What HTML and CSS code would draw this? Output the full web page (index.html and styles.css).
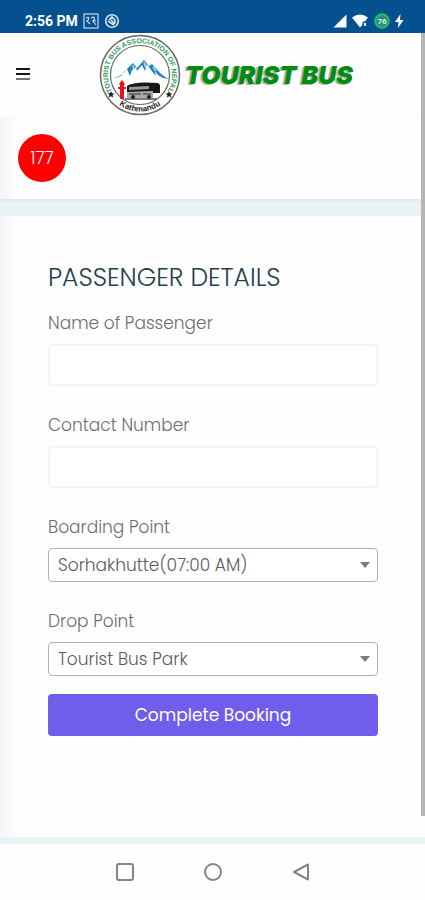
FILE: index.html
```html
<!DOCTYPE html>
<html lang="en">
<head>
  <meta charset="UTF-8" />
  <meta name="viewport" content="width=device-width, initial-scale=1" />
  <title>Tourist Bus - Passenger Details</title>
  <link rel="stylesheet" href="styles.css">
</head>
<body>
  <div class="status-bar">
    <div class="status-left">
      <span class="time">2:56 PM</span>
      <svg width="16" height="16" viewBox="0 0 16 16" fill="none" stroke="#c3d9ea" stroke-width="1.2">
        <rect x="1" y="1" width="14" height="14" />
        <path d="M3 5c3-2 4 1 1 3l3 3M8 5c3-2 5 0 2 3h3M10 8l3 4" />
      </svg>
      <svg width="16" height="16" viewBox="0 0 16 16" fill="none" stroke="#d5e5f1" stroke-width="1.6">
        <circle cx="8" cy="8" r="6.3" />
        <path d="M5 7l3-3 3 3v3M4 8l6 4M7 7l4 4" />
      </svg>
    </div>
    <div class="status-right">
      <svg width="14" height="14" viewBox="0 0 14 14" fill="#fff"><path d="M13.500 0.500V13.500H0.500Z" /></svg>
      <svg width="17" height="14" viewBox="0 0 17 14" fill="#fff">
        <path d="M0 3.500Q8 -2.500 16 3.500L13 7.500H11L10 11.500 8 13.500Z" />
        <path d="M12 9h2v3h-2z" />
      </svg>
      <svg width="16" height="16" viewBox="0 0 16 16">
        <circle cx="8" cy="8" r="6.800" fill="#2c8b83" stroke="#20c15d" stroke-width="2" />
        <text class="battery-text" x="8" y="11" text-anchor="middle">76</text>
      </svg>
      <svg width="9" height="14" viewBox="0 0 9 14" fill="#fff"><path d="M5.500 0L0 8h3.500L3 14l5.500-8H5z" /></svg>
    </div>
  </div>

  <header class="header">
    <button class="menu-btn" type="button" aria-label="Menu">
      <svg width="16" height="16" viewBox="0 0 16 16">
        <path d="M1 2h14M1 7h14" stroke="#161616" stroke-width="2" />
        <path d="M1 12h14" stroke="#777" stroke-width="2" />
      </svg>
    </button>
    <a href="#" class="brand">
      <svg class="seal" width="82" height="82" viewBox="0 0 82 82">
        <defs>
          <path id="arc-top" d="M12.700 56A32 32 0 1 1 69.300 56" />
          <path id="arc-bottom" d="M16 67.600A36.500 36.500 0 0 0 66 67.600" />
        </defs>
        <circle cx="41" cy="41" r="39.500" fill="#fff" stroke="#666" stroke-width="1.500" />
        <circle cx="41" cy="41" r="29.500" fill="#fff" stroke="#666" stroke-width="1.200" />
        <path d="M13 45l9-3 4-5 8-8 4 5 7-8 5 6 3-2 8 9 5 4 4 2-6-1-5-3-3-4 1 5-5-6-4-6-2 7-3-6-5 6-1-4-4 3-2 6-3-7-4 5-4 2z" fill="#2381bf" />
        <path d="M34 31l1 5M45 28l2 6M54 33l3 4" fill="none" stroke="#b9dced" stroke-width="1.500" />
        <path d="M23 46l3 4-1 1v14h-4V51l-1-1z" fill="#e3161b" />
        <path d="M19 53h8v2h-8z" fill="#e3161b" />
        <path d="M28 52q7-5 31-3l2 2v8H28z" fill="#171717" />
        <path d="M30 53l20-1v3l-20 1z" fill="#999" />
        <path d="M28 58l26-1v7H28z" fill="#a9aaaa" />
        <path d="M30 60h12M44 60h8M26 65h32" stroke="#555" stroke-width="1.500" />
        <circle cx="34" cy="63" r="2" fill="#222" />
        <circle cx="50" cy="63" r="2" fill="#222" />
        <path d="M12 57l1 2.300 2.500.2-1.900 1.600.6 2.400-2.200-1.300-2.200 1.300.6-2.400-1.900-1.600 2.500-.2zM70 57l1 2.300 2.500.2-1.900 1.600.6 2.400-2.200-1.300-2.200 1.300.6-2.400-1.900-1.600 2.500-.2z" fill="#222" />
        <text class="seal-top"><textPath href="#arc-top" startOffset="50%" text-anchor="middle">TOURIST BUS ASSOCIATION OF NEPAL</textPath></text>
        <text class="seal-bottom"><textPath href="#arc-bottom" startOffset="50%" text-anchor="middle">Kathmandu</textPath></text>
      </svg>
      <span class="brand-name">TOURIST BUS</span>
    </a>
  </header>

  <main class="content">
    <section class="seats">
      <span class="seat">177</span>
    </section>

    <section class="panel">
      <h1 class="title">PASSENGER DETAILS</h1>
      <form class="form">
        <div class="field">
          <label for="name">Name of Passenger</label>
          <input type="text" id="name" />
        </div>
        <div class="field">
          <label for="contact">Contact Number</label>
          <input type="tel" id="contact" />
        </div>
        <div class="field">
          <label for="boarding">Boarding Point</label>
          <div class="select-wrap">
            <select id="boarding">
              <option>Sorhakhutte(07:00 AM)</option>
            </select>
          </div>
        </div>
        <div class="field">
          <label for="drop">Drop Point</label>
          <div class="select-wrap">
            <select id="drop">
              <option>Tourist Bus Park</option>
            </select>
          </div>
        </div>
        <button class="submit-btn" type="button">Complete Booking</button>
      </form>
    </section>
    <div class="scroll-thumb"></div>
  </main>

  <nav class="nav-bar">
    <button type="button" aria-label="Recent apps">
      <svg width="20" height="20" viewBox="0 0 20 20"><rect x="2" y="2" width="16" height="16" rx="2" /></svg>
    </button>
    <button type="button" aria-label="Home">
      <svg width="20" height="20" viewBox="0 0 20 20"><circle cx="10" cy="10" r="8" /></svg>
    </button>
    <button type="button" aria-label="Back">
      <svg width="20" height="20" viewBox="0 0 20 20"><path d="M17 2.500v15L3 10z" /></svg>
    </button>
  </nav>
</body>
</html>
```

FILE: styles.css
```css
:root {
  --status-bg: #05508f;
  --gap-bg: #ebf2f5;
  --panel-bg: #fefefe;
  --title-color: #24404b;
  --label-color: #6a6e71;
  --accent: #705deb;
}

* {
  box-sizing: border-box;
}

body {
  margin: 0;
  min-height: 100vh;
  display: flex;
  flex-direction: column;
  background: var(--panel-bg);
  color: var(--label-color);
  font-family: Poppins, Inter, sans-serif;
  font-weight: 300;
}

button {
  border: none;
  padding: 0;
  background: none;
  cursor: pointer;
}

svg {
  display: block;
}

/* status bar */
.status-bar {
  height: 33px;
  padding: 8px 21px 0 25px;
  display: flex;
  justify-content: space-between;
  align-items: center;
  background: var(--status-bg);
}

.status-left,
.status-right {
  display: flex;
  align-items: center;
  gap: 5px;
}

.time {
  color: #fff;
  font-family: Roboto, sans-serif;
  font-size: 14px;
  font-weight: 700;
}

.battery-text {
  font-family: Roboto, sans-serif;
  font-size: 8px;
  font-weight: 700;
  fill: #d8f3ee;
}

/* header */
.header {
  height: 84px;
  padding: 0 15px;
  display: flex;
  align-items: center;
  gap: 68px;
}

.brand {
  display: flex;
  align-items: center;
  gap: 4px;
  text-decoration: none;
}

.seal-top {
  font-family: "Liberation Sans Narrow", "Liberation Sans", sans-serif;
  font-size: 7px;
  font-weight: 700;
  fill: #2f9a58;
}

.seal-bottom {
  font-family: "Liberation Sans", sans-serif;
  font-size: 8px;
  font-weight: 700;
  fill: #222;
}

.brand-name {
  color: #078a12;
  font-family: Inter, sans-serif;
  font-size: 25px;
  font-style: italic;
  font-weight: 900;
  white-space: nowrap;
  text-shadow: -2px 1px 0 #a9b5a9;
}

/* page content */
.content {
  position: relative;
  flex: 1;
  display: flex;
  flex-direction: column;
  gap: 17px;
  padding-bottom: 7px;
  background: var(--gap-bg);
}

.seats,
.panel {
  background: linear-gradient(to right, #f5f5f5, var(--panel-bg) 18px);
}

.seats {
  padding: 17px 18px;
  box-shadow: 0 1px 3px #d9e0e3;
}

.seat {
  display: flex;
  justify-content: center;
  align-items: center;
  width: 48px;
  height: 48px;
  border-radius: 50%;
  background: #fe0000;
  color: #fff;
  font-size: 17px;
}

.panel {
  flex: 1;
  padding: 48px 47px 48px 48px;
}

.title {
  margin: 0 0 19px;
  color: var(--title-color);
  font-size: 25px;
  font-weight: 300;
  line-height: 28px;
}

.form {
  display: flex;
  flex-direction: column;
}

.field {
  display: flex;
  flex-direction: column;
  gap: 9px;
  margin-bottom: 27px;
}

.field label {
  font-size: 17px;
  line-height: 24px;
}

.field input {
  width: 100%;
  height: 42px;
  padding: 0 10px;
  border: 2px solid #f5f5f5;
  border-radius: 4px;
  background: #fff;
  font: inherit;
}

.select-wrap {
  position: relative;
}

.select-wrap::after {
  content: "";
  position: absolute;
  top: 14px;
  right: 8px;
  border: 5px solid transparent;
  border-top: 6px solid #7a7a7a;
  border-bottom: 0;
  pointer-events: none;
}

.field select {
  display: block;
  width: 100%;
  height: 34px;
  padding: 0 24px 0 9px;
  border: 1px solid #b2b2b2;
  border-radius: 4px;
  background: #fff;
  color: #5c5c5c;
  font: inherit;
  font-size: 17px;
  appearance: none;
}

.field:nth-last-child(2) {
  margin-bottom: 18px;
}

.submit-btn {
  height: 42px;
  border-radius: 4px;
  background: var(--accent);
  color: #fff;
  font-family: inherit;
  font-size: 17px;
  font-weight: 400;
}

.scroll-thumb {
  position: absolute;
  top: -84px;
  right: 0;
  bottom: 28px;
  width: 4px;
  background: #b5b5b5;
}

/* bottom navigation */
.nav-bar {
  height: 56px;
  display: flex;
  justify-content: center;
  align-items: center;
  gap: 68px;
}

.nav-bar svg {
  fill: none;
  stroke: #858585;
  stroke-width: 2;
  stroke-linejoin: round;
}
```
